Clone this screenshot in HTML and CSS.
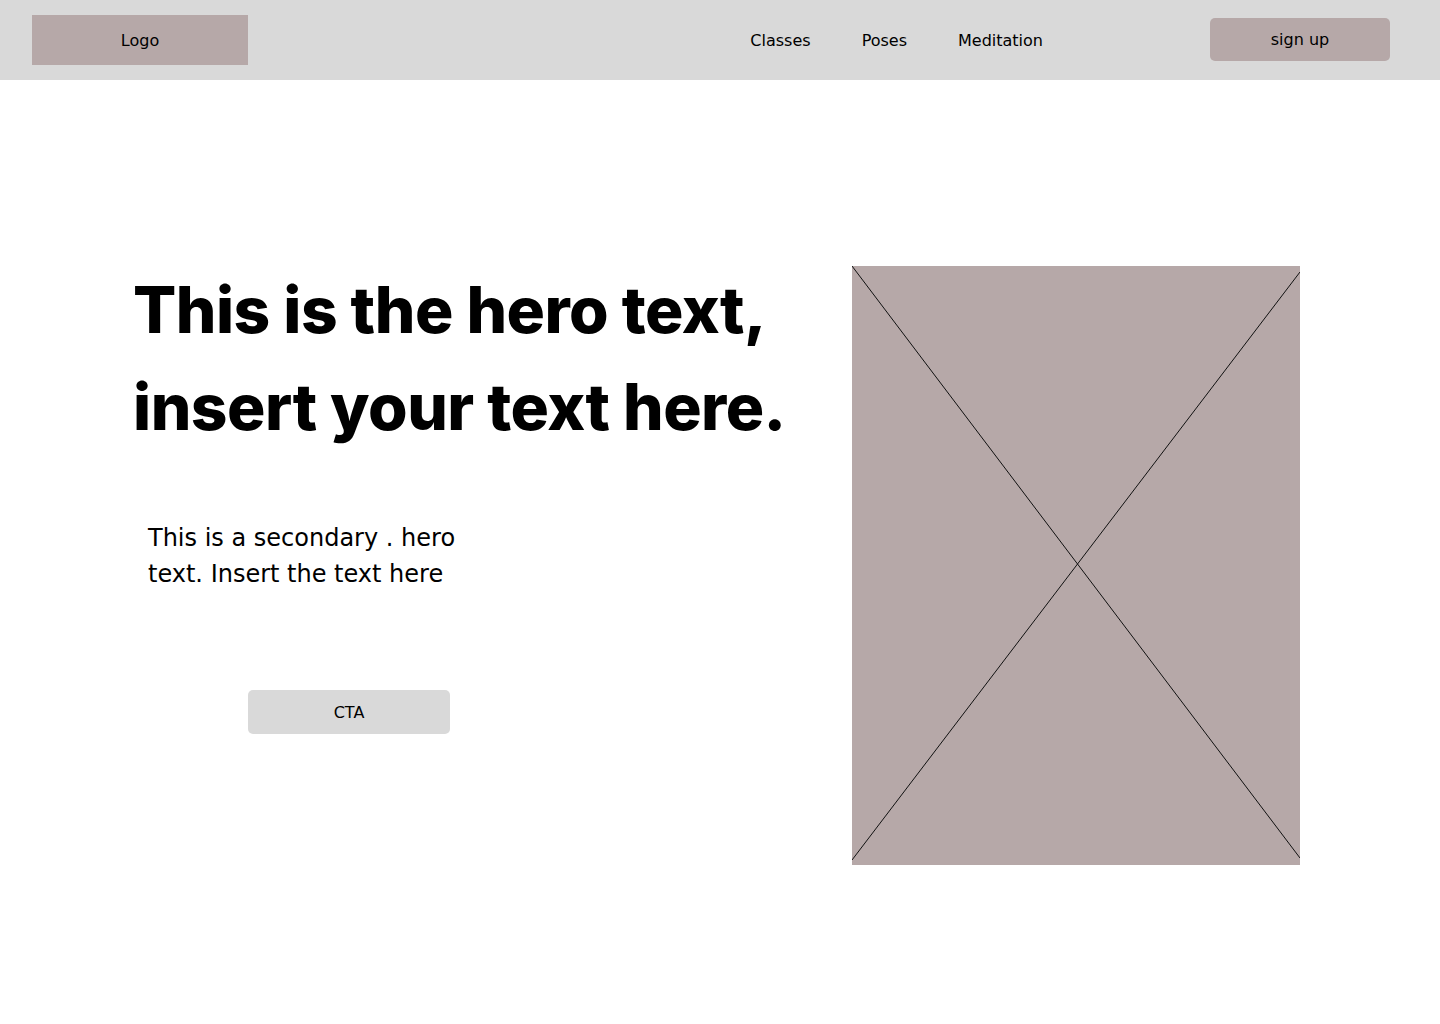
FILE: index.html
```html
<!DOCTYPE html>
<html lang="en">
<head>
<meta charset="utf-8">
<title>Yoga</title>
<link rel="stylesheet" href="styles.css">
</head>
<body>
<header class="topbar">
  <div class="logo">Logo</div>
  <nav class="nav">
    <a href="#" class="nav-link">Classes</a>
    <a href="#" class="nav-link">Poses</a>
    <a href="#" class="nav-link">Meditation</a>
  </nav>
  <a href="#" class="signup">sign up</a>
</header>
<main class="hero">
  <div class="hero-copy">
    <h1 class="hero-title">This is the hero text,<br>insert your text here.</h1>
    <p class="hero-sub">This is a secondary . hero text. Insert the text here</p>
    <a href="#" class="cta">CTA</a>
  </div>
  <div class="hero-media">
    <svg class="placeholder" viewBox="0 0 448 599" width="448" height="599" aria-hidden="true">
      <rect x="0" y="0" width="448" height="599" fill="#b6a8a8"/>
      <line x1="0" y1="0" x2="448" y2="592" stroke="#111" stroke-width="1"/>
      <line x1="448" y1="6" x2="0" y2="594" stroke="#111" stroke-width="1"/>
    </svg>
  </div>
</main>
</body>
</html>
```

FILE: styles.css
```css
* { box-sizing: border-box; }
html, body { margin: 0; padding: 0; background: #ffffff; }
body {
  font-family: "DejaVu Sans", "Noto Sans", sans-serif;
  color: #000;
  width: 1440px;
  min-height: 1024px;
}
a { color: inherit; text-decoration: none; }

.topbar {
  height: 80px;
  background: #d9d9d9;
  display: flex;
  align-items: center;
  padding: 0 50px 0 32px;
}
.logo {
  width: 216px;
  height: 50px;
  background: #b6a8a8;
  display: flex;
  align-items: center;
  justify-content: center;
  font-size: 16px;
}
.nav {
  margin-left: auto;
  margin-right: 167px;
  display: flex;
  gap: 51px;
  font-size: 16px;
}
.signup {
  width: 180px;
  height: 43px;
  margin-top: -1px;
  border-radius: 5px;
  background: #b6a8a8;
  display: flex;
  align-items: center;
  justify-content: center;
  font-size: 16px;
}

.hero {
  display: flex;
  justify-content: space-between;
  padding: 186px 140px 0 133px;
}
.hero-copy { margin-top: -5px; }
.hero-title {
  margin: 0;
  font-family: "Inter", sans-serif;
  font-weight: 800;
  font-size: 64px;
  line-height: 97px;
  letter-spacing: -0.5px;
}
.hero-sub {
  margin: 65px 0 0 15px;
  width: 330px;
  font-size: 24px;
  line-height: 36px;
}
.cta {
  display: flex;
  align-items: center;
  justify-content: center;
  margin: 98px 0 0 115px;
  width: 202px;
  height: 44px;
  border-radius: 5px;
  background: #d9d9d9;
  font-size: 16px;
}
.hero-media { width: 448px; height: 599px; }
.placeholder { display: block; }
```
